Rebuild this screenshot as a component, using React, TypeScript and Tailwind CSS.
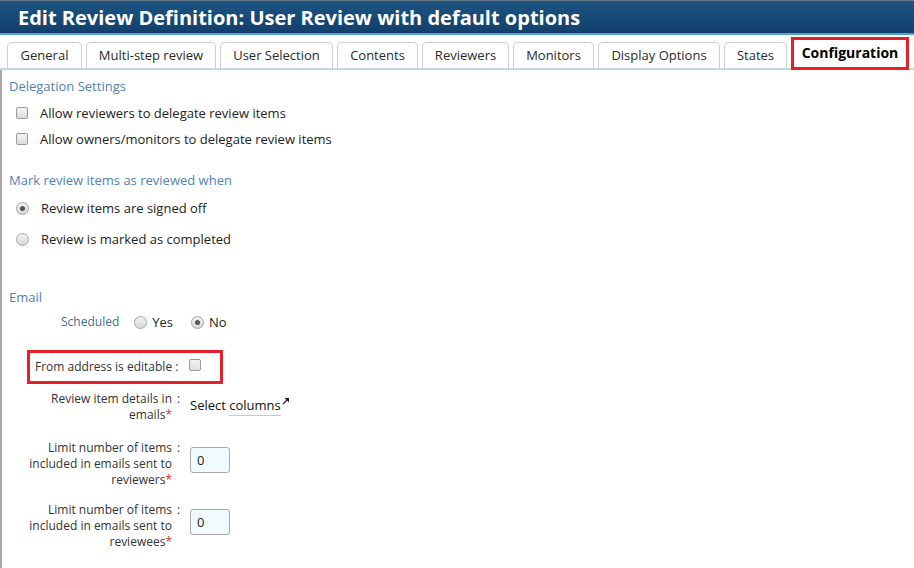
import React from 'react';

const tabs = [
  { label: 'General', w: 'w-[75px]' },
  { label: 'Multi-step review', w: 'w-[130px]' },
  { label: 'User Selection', w: 'w-[113px]' },
  { label: 'Contents', w: 'w-[81px]' },
  { label: 'Reviewers', w: 'w-[87px]' },
  { label: 'Monitors', w: 'w-[81px]' },
  { label: 'Display Options', w: 'w-[122px]' },
  { label: 'States', w: 'w-[63px]' },
];

function Checkbox() {
  return (
    <span className="inline-block h-[12px] w-[12px] shrink-0 rounded-[2px] border border-[#9a9a9a] bg-gradient-to-b from-[#f4f4f4] to-[#dcdcdc]" />
  );
}

function Radio({ checked = false }: { checked?: boolean }) {
  return (
    <span className="flex h-[13px] w-[13px] shrink-0 items-center justify-center rounded-full border border-[#a5a5a5] bg-gradient-to-b from-[#f2f2f2] to-[#d8d8d8]">
      {checked && <span className="h-[5px] w-[5px] rounded-full bg-[#555]" />}
    </span>
  );
}

function Req() {
  return <span className="text-[#e0312f]">*</span>;
}

function NumberBox() {
  return (
    <div className="flex h-[26px] w-[40px] items-center rounded-[3px] border border-[#a8a8a8] bg-[#f0fbff] pl-[6px] text-[13px] text-[#222]">
      0
    </div>
  );
}

export default function App() {
  return (
    <div className="h-[568px] w-[914px] overflow-hidden bg-white font-['Open_Sans',sans-serif] text-[#222]">
      {/* Title bar */}
      <div className="h-[33px] border-t border-[#6a7c8c] bg-gradient-to-b from-[#1e5483] to-[#123f6b] pl-[18px]">
        <h1 className="text-[20px] font-bold leading-[33px] text-white">
          Edit Review Definition: User Review with default options
        </h1>
      </div>
      <div className="h-[2px] bg-[#52a5c2]" />

      {/* Tabs */}
      <div className="flex h-[35px] items-end gap-[4px] border-b-2 border-[#bcd7e4] pl-[7px]">
        {tabs.map((t) => (
          <div
            key={t.label}
            className={`${t.w} flex h-[26px] items-center justify-center rounded-t-[5px] border border-b-0 border-[#cfcfcf] pt-[1px] text-[13px] text-[#2a2a2a]`}
          >
            {t.label}
          </div>
        ))}
        <div className="mb-[-2px] flex h-[33px] w-[118px] items-center justify-center border-[3px] border-[#e5202a] bg-white pb-[2px] text-[14px] font-bold text-black">
          Configuration
        </div>
      </div>

      {/* Body */}
      <div className="h-[500px] border-l-2 border-[#a9a9a9] pl-[7px]">
        <div className="pt-[7px] text-[13px] leading-[18px] text-[#4f82b6]">Delegation Settings</div>
        <div className="mt-[9px] flex flex-col gap-[8px] pl-[7px] text-[13px] leading-[18px]">
          <div className="flex items-center gap-[12px]">
            <Checkbox />
            <span>Allow reviewers to delegate review items</span>
          </div>
          <div className="flex items-center gap-[12px]">
            <Checkbox />
            <span>Allow owners/monitors to delegate review items</span>
          </div>
        </div>

        <div className="mt-[23px] text-[13px] leading-[18px] text-[#4f82b6]">Mark review items as reviewed when</div>
        <div className="mt-[10px] flex flex-col gap-[13px] pl-[7px] text-[13px] leading-[18px]">
          <div className="flex items-center gap-[12px]">
            <Radio checked />
            <span>Review items are signed off</span>
          </div>
          <div className="flex items-center gap-[12px]">
            <Radio />
            <span>Review is marked as completed</span>
          </div>
        </div>

        <div className="mt-[40px] text-[13px] leading-[18px] text-[#4f82b6]">Email</div>

        {/* Scheduled */}
        <div className="mt-[7px] flex items-center text-[13px] leading-[18px]">
          <span className="ml-[52px] mt-[-1px] text-[12px] text-[#3f6a98]">Scheduled</span>
          <span className="ml-[15px] flex items-center gap-[5px]">
            <Radio />
            <span>Yes</span>
          </span>
          <span className="ml-[18px] flex items-center gap-[5px]">
            <Radio checked />
            <span>No</span>
          </span>
        </div>

        {/* From address */}
        <div className="ml-[18px] mt-[19px] flex h-[34px] w-[196px] items-center border-[3px] border-[#e5202a] pl-[5px] text-[12px]">
          <span className="text-[#333]">From address is editable :</span>
          <span className="ml-[11px]">
            <Checkbox />
          </span>
        </div>

        {/* Form rows */}
        <div className="mt-[7px] grid grid-cols-[163px_18px_auto] text-[12px] leading-[16px] text-[#333]">
          <div className="text-right">
            Review item details in
            <br />
            emails
            <Req />
          </div>
          <div className="pl-[5px]">:</div>
          <div className="pt-[6px] text-[13px] text-[#111]">
            Select{' '}
            <span className="border-b border-[#c8c8c8] pb-[1px]">columns</span>
            <svg className="ml-[1px] inline-block align-top" width="8" height="8" viewBox="0 0 8 8">
              <path d="M1 7 L6.5 1.5" stroke="#222" strokeWidth="1.2" />
              <path d="M2.5 1 H7 V5.5 Z" fill="#222" />
            </svg>
          </div>

          <div className="mt-[17px] text-right">
            Limit number of items
            <br />
            included in emails sent to
            <br />
            reviewers
            <Req />
          </div>
          <div className="mt-[17px] pl-[5px]">:</div>
          <div className="mt-[17px] pt-[7px]">
            <NumberBox />
          </div>

          <div className="mt-[14px] text-right">
            Limit number of items
            <br />
            included in emails sent to
            <br />
            reviewees
            <Req />
          </div>
          <div className="mt-[14px] pl-[5px]">:</div>
          <div className="mt-[14px] pt-[7px]">
            <NumberBox />
          </div>
        </div>
      </div>
    </div>
  );
}
